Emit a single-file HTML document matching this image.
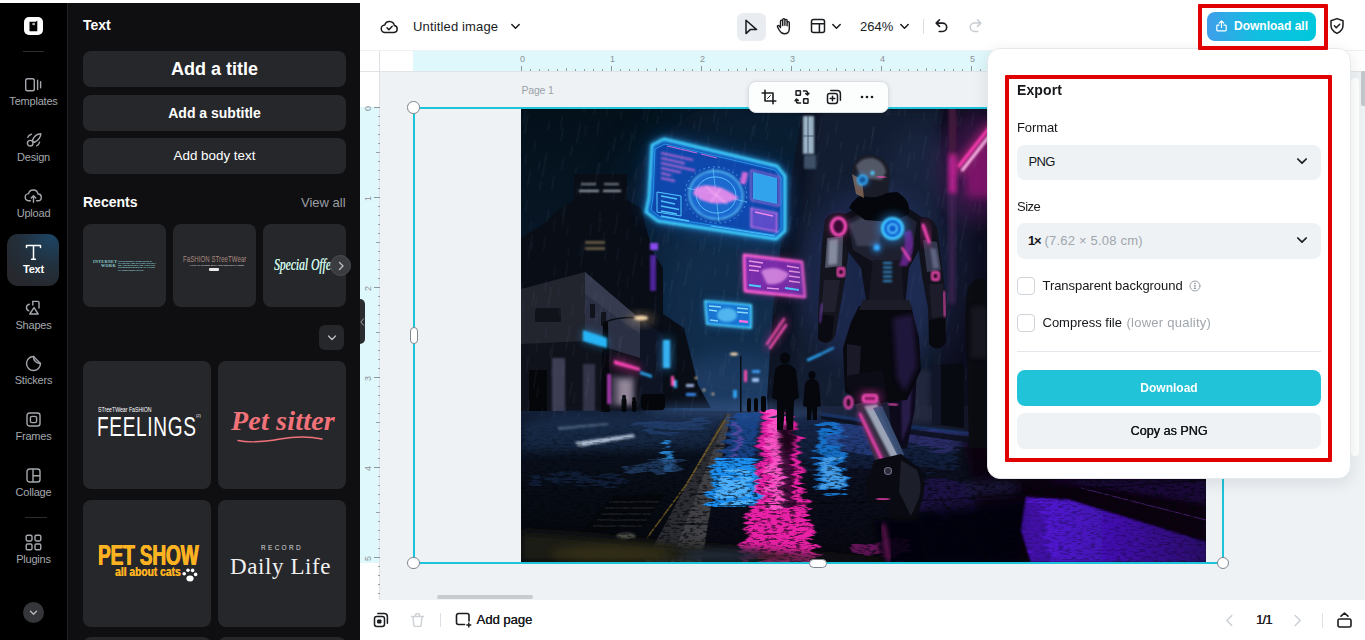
<!DOCTYPE html>
<html lang="en">
<head>
<meta charset="utf-8">
<title>Untitled image</title>
<style>
*{box-sizing:border-box;margin:0;padding:0}
html,body{width:1365px;height:640px;overflow:hidden;background:#fff;font-family:"Liberation Sans",sans-serif;}
.abs{position:absolute}
#app{position:relative;width:1365px;height:640px;overflow:hidden;background:#fff}
/* sidebar */
#side{left:0;top:3px;width:67px;height:637px;background:#000}
#panel{left:67px;top:3px;width:293px;height:637px;background:#0f0f11;border-left:1px solid #222326}
.nav{position:absolute;left:0;width:67px;text-align:center;color:#a4a8ad;font-size:11px;letter-spacing:-0.2px}
.nav svg{display:block;margin:0 auto}
.pbtn{position:absolute;left:83px;width:263px;background:#26272b;border-radius:8px;color:#fff;text-align:center;font-weight:bold}
.card{position:absolute;background:#26272b;border-radius:8px}
/* top bar */
#top{left:360px;top:3px;width:1005px;height:48px;background:#fff}
#canvas{left:360px;top:50px;width:1005px;height:550px;background:#eef2f5}
#bottom{left:360px;top:600px;width:1005px;height:40px;background:#fff}
.hd{background:#fff;border:1px solid #7f868f}
.sel{background:#eef2f5;border-radius:8px}
.cb{background:#fff;border:1px solid #cfd4da;border-radius:4px}
.t{position:absolute;white-space:nowrap;line-height:1}
</style>
</head>
<body>
<div id="app">
<!-- SIDEBAR -->
<div id="side" class="abs">
<!-- logo -->
<div class="abs" style="left:24px;top:14px;width:19px;height:18px;background:#fff;border-radius:5px"></div>
<svg class="abs" style="left:24px;top:14px" width="19" height="18" viewBox="0 0 19 18"><path d="M5.5 4.8h6.2l1.6-1.3v10.7H5.5z" fill="#000"/><circle cx="9.7" cy="7" r="1.3" fill="#fff"/><circle cx="9.9" cy="6.9" r="0.6" fill="#000"/></svg>
<div class="abs" style="left:23px;top:48px;width:21px;height:1px;background:#2c2d31"></div>
<!-- Templates -->
<svg class="abs" style="left:24px;top:74px" width="19" height="16" viewBox="0 0 19 16" fill="none" stroke="#a4a8ad" stroke-width="1.4" stroke-linecap="round"><rect x="1.7" y="1.7" width="8.6" height="12" rx="1.8"/><path d="M13.6 3.2v9.2M16.6 4.8v6"/></svg>
<div class="nav" style="top:92px">Templates</div>
<!-- Design -->
<svg class="abs" style="left:25px;top:129px" width="18" height="16" viewBox="0 0 18 16" fill="none" stroke="#a4a8ad" stroke-width="1.4" stroke-linecap="round" stroke-linejoin="round"><path d="M7.2 8.6c2-4.600 5.400-6.800 8.600-6.800c0 3.600-2.400 6.400-6.400 8.600z"/><circle cx="5.200" cy="11.200" r="2.800"/><path d="M2.800 5.400c0.600-1.800 1.800-2.800 3.600-3.200M14.600 10.200c-0.400 1.800-1.400 3-3 3.600"/></svg>
<div class="nav" style="top:148px">Design</div>
<!-- Upload -->
<svg class="abs" style="left:24px;top:185px" width="19" height="16" viewBox="0 0 19 16" fill="none" stroke="#a4a8ad" stroke-width="1.4" stroke-linecap="round" stroke-linejoin="round"><path d="M6.400 12.800h-1.400a3.600 3.600 0 0 1-0.400-7.200a4.800 4.800 0 0 1 9.400 0.400a3.400 3.400 0 0 1-0.200 6.800h-1.200"/><path d="M9.500 14.200v-6M7.200 10l2.300-2.300l2.300 2.300"/></svg>
<div class="nav" style="top:204px">Upload</div>
<!-- Text active -->
<div class="abs" style="left:7px;top:231px;width:52px;height:52px;border-radius:11px;background:radial-gradient(circle at 85% 5%,#1d4463 0%,#22303d 45%,#26282d 80%)"></div>
<svg class="abs" style="left:25px;top:241px" width="17" height="17" viewBox="0 0 17 17" fill="none" stroke="#fff" stroke-width="1.5" stroke-linecap="round" stroke-linejoin="round"><path d="M1.500 3.600v-2h14v2M8.500 1.600v13.400M6.600 15.200h3.800"/></svg>
<div class="nav" style="top:260px;color:#fff;font-weight:bold">Text</div>
<!-- Shapes -->
<svg class="abs" style="left:24px;top:297px" width="18" height="16" viewBox="0 0 18 16" fill="none" stroke="#a4a8ad" stroke-width="1.4" stroke-linecap="round" stroke-linejoin="round"><path d="M8.800 1.400h5a1.200 1.200 0 0 1 1.200 1.200v5.400"/><path d="M5.400 4.200a3.400 3.400 0 0 0-0.600 6.600"/><path d="M10 7.600l4.200 6.400h-8.400z"/><path d="M8.800 1.400v3.600"/></svg>
<div class="nav" style="top:316px">Shapes</div>
<!-- Stickers -->
<svg class="abs" style="left:25px;top:352px" width="17" height="17" viewBox="0 0 17 17" fill="none" stroke="#a4a8ad" stroke-width="1.400" stroke-linecap="round" stroke-linejoin="round"><path d="M8.500 1.500a7 7 0 1 0 7 7c-3.900 0.300-7.300-3.100-7-7z"/><path d="M8.500 1.500l7 7"/></svg>
<div class="nav" style="top:371px">Stickers</div>
<!-- Frames -->
<svg class="abs" style="left:26px;top:409px" width="15" height="15" viewBox="0 0 15 15" fill="none" stroke="#a4a8ad" stroke-width="1.400"><rect x="1" y="1" width="13" height="13" rx="2.500"/><rect x="4.400" y="4.400" width="6.200" height="6.200" rx="1.600"/></svg>
<div class="nav" style="top:427px">Frames</div>
<!-- Collage -->
<svg class="abs" style="left:26px;top:465px" width="15" height="15" viewBox="0 0 15 15" fill="none" stroke="#a4a8ad" stroke-width="1.400"><rect x="1" y="1" width="13" height="13" rx="2.500"/><path d="M7 1v13M7 7.800h7"/></svg>
<div class="nav" style="top:483px">Collage</div>
<div class="abs" style="left:25px;top:514px;width:22px;height:1px;background:#2c2d31"></div>
<!-- Plugins -->
<svg class="abs" style="left:25px;top:531px" width="17" height="17" viewBox="0 0 17 17" fill="none" stroke="#a4a8ad" stroke-width="1.400"><rect x="1.200" y="1.200" width="5.800" height="5.800" rx="1.400"/><rect x="10" y="1.200" width="5.800" height="5.800" rx="1.400"/><rect x="1.200" y="10" width="5.800" height="5.800" rx="1.400"/><rect x="10" y="10" width="5.800" height="5.800" rx="1.400"/></svg>
<div class="nav" style="top:550px">Plugins</div>
<div class="abs" style="left:23px;top:599px;width:21px;height:21px;border-radius:50%;background:#34363a"></div>
<svg class="abs" style="left:23px;top:599px" width="21" height="21" viewBox="0 0 21 21" fill="none" stroke="#b4b8bd" stroke-width="1.400" stroke-linecap="round" stroke-linejoin="round"><path d="M7.500 9.200l3 3l3-3"/></svg>
</div>
<div id="panel" class="abs"></div>
<div class="t" style="left:83px;top:18px;font-size:14px;font-weight:bold;color:#fff">Text</div>
<div class="pbtn" style="top:51px;height:36px;font-size:18px;line-height:36px">Add a title</div>
<div class="pbtn" style="top:95px;height:36px;font-size:14px;line-height:36px">Add a subtitle</div>
<div class="pbtn" style="top:138px;height:36px;font-size:13.400px;line-height:36px;font-weight:normal">Add body text</div>
<div class="t" style="left:83px;top:195px;font-size:14px;font-weight:bold;color:#fff">Recents</div>
<div class="t" style="left:301px;top:196px;font-size:13px;color:#9a9ea4">View all</div>
<!-- recents cards -->
<div class="card" style="left:83px;top:224px;width:83px;height:83px"></div>
<div class="card" style="left:173px;top:224px;width:83px;height:83px"></div>
<div class="card" style="left:263px;top:224px;width:83px;height:83px"></div>
<div class="t" style="left:93px;top:259.500px;font-size:4.200px;color:#8fd3d8;font-family:'Liberation Serif',serif;font-weight:bold;letter-spacing:0.300px;text-align:right;width:23px;line-height:4.600px">INTERNET<br>WORK</div>
<div class="t" style="left:118px;top:259.500px;font-size:2.200px;color:#8fd3d8;line-height:2.300px;width:40px;white-space:normal;font-weight:bold">THE INTERNET AS WE KNOW IS CHANGING AND SHAPING THE WAY WE ARE WORKING AND ALSO THE EXPERIENCE MADE UP OF TAKING OF USER INTERACTION</div>
<div class="t" style="left:183px;top:254px;font-size:7px;color:#a98a80;letter-spacing:0.100px;transform:scale(0.860,1.250);transform-origin:0 0">FaSHION STreeTWear</div>
<div class="t" style="left:190px;top:263.500px;font-size:2.200px;color:#c8c8c8;letter-spacing:0.100px;font-weight:bold">LOOK IS ON NEW WITH OUR NEW DROP ITEMS</div>
<div class="abs" style="left:209px;top:268px;width:10px;height:2.500px;border-radius:1px;background:#e8e8e8"></div>
<div class="t" style="left:274px;top:255px;font-size:16.500px;color:#c9f0e2;font-family:'Liberation Serif',serif;font-style:italic;width:100px;height:22px;line-height:20px;overflow:hidden;transform:scaleX(0.700);transform-origin:0 0;text-shadow:0.400px 0 0 #c9f0e2">Special Offer</div>
<div class="abs" style="left:330px;top:255px;width:21px;height:21px;border-radius:50%;background:#3a3c40;border:1px solid #4a4c50"></div>
<svg class="abs" style="left:330.500px;top:255.500px" width="20" height="20" viewBox="0 0 20 20" fill="none" stroke="#b9bcc1" stroke-width="1.400" stroke-linecap="round" stroke-linejoin="round"><path d="M8.500 6.500l3.500 3.500l-3.500 3.500"/></svg>
<div class="card" style="left:319px;top:325px;width:25px;height:25px;border-radius:6px"></div>
<svg class="abs" style="left:318.500px;top:325px" width="26" height="25" viewBox="0 0 26 25" fill="none" stroke="#b9bcc1" stroke-width="1.400" stroke-linecap="round" stroke-linejoin="round"><path d="M9.500 11l3.500 3.500l3.500-3.500"/></svg>
<!-- big cards -->
<div class="card" style="left:83px;top:361px;width:128px;height:128px"></div>
<div class="card" style="left:218px;top:361px;width:128px;height:128px"></div>
<div class="card" style="left:83px;top:500px;width:128px;height:127px"></div>
<div class="card" style="left:218px;top:500px;width:128px;height:127px"></div>
<div class="card" style="left:83px;top:637px;width:128px;height:20px"></div>
<div class="card" style="left:218px;top:637px;width:128px;height:20px"></div>
<!-- FEELINGS -->
<div class="t" style="left:97.500px;top:407px;font-size:6.500px;color:#fff;transform:scaleX(0.800);transform-origin:0 0">STreeTWear FaSHION</div>
<div class="t" style="left:97px;top:413px;font-size:28px;color:#fff;transform:scaleX(0.680);transform-origin:0 0;letter-spacing:1px">FEELINGS</div>
<div class="t" style="left:196px;top:414px;font-size:4px;color:#fff">(2)</div>
<!-- Pet sitter -->
<div class="t" style="left:231px;top:407px;font-size:28px;color:#f2727a;font-family:'Liberation Serif',serif;font-style:italic;font-weight:bold;letter-spacing:0.200px">Pet sitter</div>
<svg class="abs" style="left:236px;top:434px" width="90" height="10" viewBox="0 0 90 10" fill="none" stroke="#f2727a" stroke-width="1.400" stroke-linecap="round"><path d="M2 6.500c14 3 28 1 42-1.500s28-3 42 0"/></svg>
<!-- PET SHOW -->
<div class="t" style="left:98px;top:541px;font-size:29px;color:#fbb321;font-weight:bold;transform:scaleX(0.660);transform-origin:0 0;letter-spacing:-0.300px;text-shadow:0.500px 0 0 #fbb321,-0.500px 0 0 #fbb321">PET SHOW</div>
<div class="t" style="left:115px;top:566px;font-size:12.500px;color:#fbb321;font-weight:bold;transform:scaleX(0.820);transform-origin:0 0;text-shadow:0.400px 0 0 #fbb321">all about cats</div>
<svg class="abs" style="left:181px;top:567px" width="17" height="16" viewBox="0 0 17 16" fill="#fff"><ellipse cx="9" cy="11.500" rx="3.600" ry="3"/><circle cx="3.200" cy="6.800" r="1.800"/><circle cx="7" cy="3.200" r="1.800"/><circle cx="11.600" cy="3.400" r="1.800"/><circle cx="14.600" cy="7.400" r="1.800"/></svg>
<!-- Daily Life -->
<div class="t" style="left:261px;top:544.500px;font-size:6.500px;color:#d8d8d8;letter-spacing:2.300px">RECORD</div>
<div class="t" style="left:230px;top:555px;font-size:23px;color:#f0f0f0;font-family:'Liberation Serif',serif;letter-spacing:0.600px">Daily Life</div>
<!-- TOPBAR -->
<div id="top" class="abs"></div>
<svg class="abs" style="left:380px;top:18px" width="19" height="17" viewBox="0 0 19 17" fill="none" stroke="#1a1c1f" stroke-width="1.500" stroke-linecap="round" stroke-linejoin="round"><path d="M5.200 14.500a3.700 3.700 0 0 1-0.500-7.400a5 5 0 0 1 9.700 0.500a3.500 3.500 0 0 1-0.300 6.900z"/><path d="M7 9.800l1.900 1.900l3.300-3.400"/></svg>
<div class="t" style="left:413px;top:20px;font-size:13px;color:#1a1c1f;letter-spacing:0.150px">Untitled image</div>
<svg class="abs" style="left:510px;top:22px" width="11" height="9" viewBox="0 0 11 9" fill="none" stroke="#1a1c1f" stroke-width="1.500" stroke-linecap="round" stroke-linejoin="round"><path d="M1.800 2.500l3.700 3.700l3.700-3.700"/></svg>
<div class="abs" style="left:737px;top:12.500px;width:28.500px;height:28.500px;border-radius:6px;background:#e9edf1"></div>
<svg class="abs" style="left:743px;top:18px" width="17" height="18" viewBox="0 0 17 18" fill="none" stroke="#1a1c1f" stroke-width="1.500" stroke-linejoin="round"><path d="M3 2.200v13.400l4.200-4h6.400z"/></svg>
<svg class="abs" style="left:775px;top:17px" width="18" height="19" viewBox="0 0 18 19" fill="none" stroke="#1a1c1f" stroke-width="1.400" stroke-linecap="round" stroke-linejoin="round"><path d="M5.500 10.500v-6.300a1.100 1.100 0 0 1 2.200 0v4.300v-5.800a1.100 1.100 0 0 1 2.200 0v5.600v-4.800a1.100 1.100 0 0 1 2.200 0v5.200v-3a1.100 1.100 0 0 1 2.200 0v5.800c0 3.200-2 5.300-5 5.300c-2.400 0-3.600-1.200-4.800-3.300l-2-3.600c-0.600-1.200 0.800-2 1.700-1z"/></svg>
<svg class="abs" style="left:810px;top:18px" width="16" height="16" viewBox="0 0 16 16" fill="none" stroke="#1a1c1f" stroke-width="1.500" stroke-linejoin="round"><rect x="1.500" y="1.500" width="13" height="13" rx="2"/><path d="M1.500 5.800h13M9.400 5.800v8.700"/></svg>
<svg class="abs" style="left:831px;top:22px" width="11" height="9" viewBox="0 0 11 9" fill="none" stroke="#1a1c1f" stroke-width="1.500" stroke-linecap="round" stroke-linejoin="round"><path d="M1.800 2.500l3.700 3.700l3.700-3.700"/></svg>
<div class="t" style="left:860px;top:20px;font-size:13px;color:#1a1c1f">264%</div>
<svg class="abs" style="left:899px;top:22px" width="11" height="9" viewBox="0 0 11 9" fill="none" stroke="#1a1c1f" stroke-width="1.500" stroke-linecap="round" stroke-linejoin="round"><path d="M1.800 2.500l3.700 3.700l3.700-3.700"/></svg>
<div class="abs" style="left:923px;top:19px;width:1px;height:15px;background:#d9dde1"></div>
<svg class="abs" style="left:934px;top:18px" width="15" height="16" viewBox="0 0 15 16" fill="none" stroke="#1a1c1f" stroke-width="1.600" stroke-linecap="round" stroke-linejoin="round"><path d="M5.500 1.800l-3.300 3.300l3.300 3.300M2.500 5.100h6a4.200 4.200 0 0 1 0 8.400h-3.300"/></svg>
<svg class="abs" style="left:968px;top:18px" width="15" height="16" viewBox="0 0 15 16" fill="none" stroke="#c9cdd2" stroke-width="1.500" stroke-linecap="round" stroke-linejoin="round"><path d="M9.500 1.800l3.300 3.300l-3.300 3.300M12.500 5.100h-6a4.200 4.200 0 0 0 0 8.400h3.300"/></svg>
<!-- download all -->
<div class="abs" style="left:1207px;top:12px;width:109px;height:29px;border-radius:8px;background:linear-gradient(90deg,#3f9eea 0%,#12bfe0 45%,#00c8dc 100%)"></div>
<svg class="abs" style="left:1215px;top:19px" width="13" height="14" viewBox="0 0 13 14" fill="none" stroke="#fff" stroke-width="1.200" stroke-linecap="round" stroke-linejoin="round"><path d="M6.500 8.500v-6.500M4.300 4l2.200-2.200l2.200 2.200M4 6.200h-1.400a0.800 0.800 0 0 0-0.800 0.800v4a0.800 0.800 0 0 0 0.800 0.800h7.800a0.800 0.800 0 0 0 0.800-0.800v-4a0.800 0.800 0 0 0-0.800-0.800h-1.400"/></svg>
<div class="t" style="left:1234px;top:20px;font-size:12px;font-weight:bold;color:#fff">Download all</div>
<svg class="abs" style="left:1329px;top:17px" width="16" height="18" viewBox="0 0 16 18" fill="none" stroke="#1a1c1f" stroke-width="1.500" stroke-linecap="round" stroke-linejoin="round"><path d="M8 1.600l6 2.200v4.800c0 3.600-2.400 6.200-6 7.800c-3.600-1.600-6-4.200-6-7.800v-4.800z"/><path d="M5.400 8.800l1.900 1.900l3.400-3.500"/></svg>
<!-- CANVAS -->
<div id="canvas" class="abs"></div>
<div class="abs" style="left:360px;top:50.500px;width:1005px;height:1px;background:#e0e4e7"></div>
<!-- h ruler -->
<div class="abs" style="left:360px;top:51px;width:1005px;height:20px;background:#fff"></div>
<div class="abs" style="left:360px;top:71px;width:1005px;height:1px;background:#e0e4e7"></div>
<div class="abs" style="left:413px;top:51px;width:810px;height:20px;background:#dff8fb"></div>

<!-- v ruler -->
<div class="abs" style="left:360px;top:72px;width:20px;height:528px;background:#fff"></div>
<div class="abs" style="left:360px;top:107px;width:20px;height:456px;background:#dff8fb"></div>
<div class="abs" style="left:379px;top:51px;width:1px;height:549px;background:#dde1e5"></div>
<div class="abs" style="left:521px;top:66px;width:1px;height:5px;background:#8f959c"></div>
<div class="t" style="left:520px;top:55px;font-size:9px;color:#8b9198">0</div>
<div class="abs" style="left:530px;top:69px;width:1px;height:2px;background:#9aa0a7"></div>
<div class="abs" style="left:539px;top:69px;width:1px;height:2px;background:#9aa0a7"></div>
<div class="abs" style="left:548px;top:69px;width:1px;height:2px;background:#9aa0a7"></div>
<div class="abs" style="left:557px;top:69px;width:1px;height:2px;background:#9aa0a7"></div>
<div class="abs" style="left:566px;top:68px;width:1px;height:3px;background:#9aa0a7"></div>
<div class="abs" style="left:575px;top:69px;width:1px;height:2px;background:#9aa0a7"></div>
<div class="abs" style="left:584px;top:69px;width:1px;height:2px;background:#9aa0a7"></div>
<div class="abs" style="left:593px;top:69px;width:1px;height:2px;background:#9aa0a7"></div>
<div class="abs" style="left:602px;top:69px;width:1px;height:2px;background:#9aa0a7"></div>
<div class="abs" style="left:611px;top:66px;width:1px;height:5px;background:#8f959c"></div>
<div class="t" style="left:610px;top:55px;font-size:9px;color:#8b9198">1</div>
<div class="abs" style="left:620px;top:69px;width:1px;height:2px;background:#9aa0a7"></div>
<div class="abs" style="left:629px;top:69px;width:1px;height:2px;background:#9aa0a7"></div>
<div class="abs" style="left:638px;top:69px;width:1px;height:2px;background:#9aa0a7"></div>
<div class="abs" style="left:647px;top:69px;width:1px;height:2px;background:#9aa0a7"></div>
<div class="abs" style="left:656px;top:68px;width:1px;height:3px;background:#9aa0a7"></div>
<div class="abs" style="left:665px;top:69px;width:1px;height:2px;background:#9aa0a7"></div>
<div class="abs" style="left:674px;top:69px;width:1px;height:2px;background:#9aa0a7"></div>
<div class="abs" style="left:683px;top:69px;width:1px;height:2px;background:#9aa0a7"></div>
<div class="abs" style="left:692px;top:69px;width:1px;height:2px;background:#9aa0a7"></div>
<div class="abs" style="left:701px;top:66px;width:1px;height:5px;background:#8f959c"></div>
<div class="t" style="left:700px;top:55px;font-size:9px;color:#8b9198">2</div>
<div class="abs" style="left:710px;top:69px;width:1px;height:2px;background:#9aa0a7"></div>
<div class="abs" style="left:719px;top:69px;width:1px;height:2px;background:#9aa0a7"></div>
<div class="abs" style="left:728px;top:69px;width:1px;height:2px;background:#9aa0a7"></div>
<div class="abs" style="left:737px;top:69px;width:1px;height:2px;background:#9aa0a7"></div>
<div class="abs" style="left:746px;top:68px;width:1px;height:3px;background:#9aa0a7"></div>
<div class="abs" style="left:755px;top:69px;width:1px;height:2px;background:#9aa0a7"></div>
<div class="abs" style="left:764px;top:69px;width:1px;height:2px;background:#9aa0a7"></div>
<div class="abs" style="left:773px;top:69px;width:1px;height:2px;background:#9aa0a7"></div>
<div class="abs" style="left:782px;top:69px;width:1px;height:2px;background:#9aa0a7"></div>
<div class="abs" style="left:791px;top:66px;width:1px;height:5px;background:#8f959c"></div>
<div class="t" style="left:790px;top:55px;font-size:9px;color:#8b9198">3</div>
<div class="abs" style="left:800px;top:69px;width:1px;height:2px;background:#9aa0a7"></div>
<div class="abs" style="left:809px;top:69px;width:1px;height:2px;background:#9aa0a7"></div>
<div class="abs" style="left:818px;top:69px;width:1px;height:2px;background:#9aa0a7"></div>
<div class="abs" style="left:827px;top:69px;width:1px;height:2px;background:#9aa0a7"></div>
<div class="abs" style="left:836px;top:68px;width:1px;height:3px;background:#9aa0a7"></div>
<div class="abs" style="left:845px;top:69px;width:1px;height:2px;background:#9aa0a7"></div>
<div class="abs" style="left:854px;top:69px;width:1px;height:2px;background:#9aa0a7"></div>
<div class="abs" style="left:863px;top:69px;width:1px;height:2px;background:#9aa0a7"></div>
<div class="abs" style="left:872px;top:69px;width:1px;height:2px;background:#9aa0a7"></div>
<div class="abs" style="left:881px;top:66px;width:1px;height:5px;background:#8f959c"></div>
<div class="t" style="left:880px;top:55px;font-size:9px;color:#8b9198">4</div>
<div class="abs" style="left:890px;top:69px;width:1px;height:2px;background:#9aa0a7"></div>
<div class="abs" style="left:899px;top:69px;width:1px;height:2px;background:#9aa0a7"></div>
<div class="abs" style="left:908px;top:69px;width:1px;height:2px;background:#9aa0a7"></div>
<div class="abs" style="left:917px;top:69px;width:1px;height:2px;background:#9aa0a7"></div>
<div class="abs" style="left:926px;top:68px;width:1px;height:3px;background:#9aa0a7"></div>
<div class="abs" style="left:935px;top:69px;width:1px;height:2px;background:#9aa0a7"></div>
<div class="abs" style="left:944px;top:69px;width:1px;height:2px;background:#9aa0a7"></div>
<div class="abs" style="left:953px;top:69px;width:1px;height:2px;background:#9aa0a7"></div>
<div class="abs" style="left:962px;top:69px;width:1px;height:2px;background:#9aa0a7"></div>
<div class="abs" style="left:971px;top:66px;width:1px;height:5px;background:#8f959c"></div>
<div class="t" style="left:970px;top:55px;font-size:9px;color:#8b9198">5</div>
<div class="abs" style="left:980px;top:69px;width:1px;height:2px;background:#9aa0a7"></div>
<div class="abs" style="left:989px;top:69px;width:1px;height:2px;background:#9aa0a7"></div>
<div class="abs" style="left:998px;top:69px;width:1px;height:2px;background:#9aa0a7"></div>
<div class="abs" style="left:374px;top:107px;width:6px;height:1px;background:#8f959c"></div>
<div class="t" style="left:364.500px;top:104px;font-size:9px;color:#8b9198;transform:rotate(-90deg);transform-origin:50% 50%;width:6px;text-align:center">0</div>
<div class="abs" style="left:378px;top:116px;width:2px;height:1px;background:#9aa0a7"></div>
<div class="abs" style="left:378px;top:125px;width:2px;height:1px;background:#9aa0a7"></div>
<div class="abs" style="left:378px;top:134px;width:2px;height:1px;background:#9aa0a7"></div>
<div class="abs" style="left:378px;top:143px;width:2px;height:1px;background:#9aa0a7"></div>
<div class="abs" style="left:376px;top:152px;width:4px;height:1px;background:#9aa0a7"></div>
<div class="abs" style="left:378px;top:161px;width:2px;height:1px;background:#9aa0a7"></div>
<div class="abs" style="left:378px;top:170px;width:2px;height:1px;background:#9aa0a7"></div>
<div class="abs" style="left:378px;top:179px;width:2px;height:1px;background:#9aa0a7"></div>
<div class="abs" style="left:378px;top:188px;width:2px;height:1px;background:#9aa0a7"></div>
<div class="abs" style="left:374px;top:197px;width:6px;height:1px;background:#8f959c"></div>
<div class="t" style="left:364.500px;top:194px;font-size:9px;color:#8b9198;transform:rotate(-90deg);transform-origin:50% 50%;width:6px;text-align:center">1</div>
<div class="abs" style="left:378px;top:206px;width:2px;height:1px;background:#9aa0a7"></div>
<div class="abs" style="left:378px;top:215px;width:2px;height:1px;background:#9aa0a7"></div>
<div class="abs" style="left:378px;top:224px;width:2px;height:1px;background:#9aa0a7"></div>
<div class="abs" style="left:378px;top:233px;width:2px;height:1px;background:#9aa0a7"></div>
<div class="abs" style="left:376px;top:242px;width:4px;height:1px;background:#9aa0a7"></div>
<div class="abs" style="left:378px;top:251px;width:2px;height:1px;background:#9aa0a7"></div>
<div class="abs" style="left:378px;top:260px;width:2px;height:1px;background:#9aa0a7"></div>
<div class="abs" style="left:378px;top:269px;width:2px;height:1px;background:#9aa0a7"></div>
<div class="abs" style="left:378px;top:278px;width:2px;height:1px;background:#9aa0a7"></div>
<div class="abs" style="left:374px;top:287px;width:6px;height:1px;background:#8f959c"></div>
<div class="t" style="left:364.500px;top:284px;font-size:9px;color:#8b9198;transform:rotate(-90deg);transform-origin:50% 50%;width:6px;text-align:center">2</div>
<div class="abs" style="left:378px;top:296px;width:2px;height:1px;background:#9aa0a7"></div>
<div class="abs" style="left:378px;top:305px;width:2px;height:1px;background:#9aa0a7"></div>
<div class="abs" style="left:378px;top:314px;width:2px;height:1px;background:#9aa0a7"></div>
<div class="abs" style="left:378px;top:323px;width:2px;height:1px;background:#9aa0a7"></div>
<div class="abs" style="left:376px;top:332px;width:4px;height:1px;background:#9aa0a7"></div>
<div class="abs" style="left:378px;top:341px;width:2px;height:1px;background:#9aa0a7"></div>
<div class="abs" style="left:378px;top:350px;width:2px;height:1px;background:#9aa0a7"></div>
<div class="abs" style="left:378px;top:359px;width:2px;height:1px;background:#9aa0a7"></div>
<div class="abs" style="left:378px;top:368px;width:2px;height:1px;background:#9aa0a7"></div>
<div class="abs" style="left:374px;top:377px;width:6px;height:1px;background:#8f959c"></div>
<div class="t" style="left:364.500px;top:374px;font-size:9px;color:#8b9198;transform:rotate(-90deg);transform-origin:50% 50%;width:6px;text-align:center">3</div>
<div class="abs" style="left:378px;top:386px;width:2px;height:1px;background:#9aa0a7"></div>
<div class="abs" style="left:378px;top:395px;width:2px;height:1px;background:#9aa0a7"></div>
<div class="abs" style="left:378px;top:404px;width:2px;height:1px;background:#9aa0a7"></div>
<div class="abs" style="left:378px;top:413px;width:2px;height:1px;background:#9aa0a7"></div>
<div class="abs" style="left:376px;top:422px;width:4px;height:1px;background:#9aa0a7"></div>
<div class="abs" style="left:378px;top:431px;width:2px;height:1px;background:#9aa0a7"></div>
<div class="abs" style="left:378px;top:440px;width:2px;height:1px;background:#9aa0a7"></div>
<div class="abs" style="left:378px;top:449px;width:2px;height:1px;background:#9aa0a7"></div>
<div class="abs" style="left:378px;top:458px;width:2px;height:1px;background:#9aa0a7"></div>
<div class="abs" style="left:374px;top:467px;width:6px;height:1px;background:#8f959c"></div>
<div class="t" style="left:364.500px;top:464px;font-size:9px;color:#8b9198;transform:rotate(-90deg);transform-origin:50% 50%;width:6px;text-align:center">4</div>
<div class="abs" style="left:378px;top:476px;width:2px;height:1px;background:#9aa0a7"></div>
<div class="abs" style="left:378px;top:485px;width:2px;height:1px;background:#9aa0a7"></div>
<div class="abs" style="left:378px;top:494px;width:2px;height:1px;background:#9aa0a7"></div>
<div class="abs" style="left:378px;top:503px;width:2px;height:1px;background:#9aa0a7"></div>
<div class="abs" style="left:376px;top:512px;width:4px;height:1px;background:#9aa0a7"></div>
<div class="abs" style="left:378px;top:521px;width:2px;height:1px;background:#9aa0a7"></div>
<div class="abs" style="left:378px;top:530px;width:2px;height:1px;background:#9aa0a7"></div>
<div class="abs" style="left:378px;top:539px;width:2px;height:1px;background:#9aa0a7"></div>
<div class="abs" style="left:378px;top:548px;width:2px;height:1px;background:#9aa0a7"></div>
<div class="abs" style="left:374px;top:557px;width:6px;height:1px;background:#8f959c"></div>
<div class="t" style="left:364.500px;top:554px;font-size:9px;color:#8b9198;transform:rotate(-90deg);transform-origin:50% 50%;width:6px;text-align:center">5</div>
<div class="abs" style="left:378px;top:566px;width:2px;height:1px;background:#9aa0a7"></div>
<div class="abs" style="left:378px;top:575px;width:2px;height:1px;background:#9aa0a7"></div>
<div class="abs" style="left:378px;top:584px;width:2px;height:1px;background:#9aa0a7"></div>
<div class="abs" style="left:378px;top:593px;width:2px;height:1px;background:#9aa0a7"></div>
<div class="t" style="left:521.500px;top:85px;font-size:10.500px;color:#9ba1a8;letter-spacing:-0.200px">Page 1</div>
<!-- IMAGE -->
<div id="img" class="abs" style="left:521px;top:108px;width:685px;height:454px;background:#0a1420;overflow:hidden">
<!--IMG-START-->
<svg width="685" height="454" viewBox="0 0 685 454" style="position:absolute;left:0;top:0;filter:blur(0.6px)">
<defs>
<filter id="b1" x="-20%" y="-20%" width="140%" height="140%"><feGaussianBlur stdDeviation="1"/></filter>
<filter id="b2" x="-30%" y="-30%" width="160%" height="160%"><feGaussianBlur stdDeviation="2.500"/></filter>
<filter id="b4" x="-40%" y="-40%" width="180%" height="180%"><feGaussianBlur stdDeviation="5"/></filter>
<filter id="b8" x="-50%" y="-50%" width="200%" height="200%"><feGaussianBlur stdDeviation="10"/></filter>
<filter id="b16" x="-60%" y="-60%" width="220%" height="220%"><feGaussianBlur stdDeviation="20"/></filter>
<linearGradient id="sky" x1="0" y1="0" x2="0" y2="1"><stop offset="0" stop-color="#04111b"/><stop offset="0.550" stop-color="#0a1a2e"/><stop offset="1" stop-color="#15294a"/></linearGradient>
<linearGradient id="road" x1="0" y1="0" x2="0" y2="1"><stop offset="0" stop-color="#131f36"/><stop offset="0.220" stop-color="#0a111e"/><stop offset="0.600" stop-color="#070b13"/><stop offset="1" stop-color="#05070c"/></linearGradient>
<linearGradient id="walk" x1="0" y1="0" x2="0" y2="1"><stop offset="0" stop-color="#18223c"/><stop offset="0.350" stop-color="#0c1020"/><stop offset="1" stop-color="#07070f"/></linearGradient>
<linearGradient id="pinkr" x1="0" y1="0" x2="0" y2="1"><stop offset="0" stop-color="#ff2fb4" stop-opacity="0.950"/><stop offset="0.500" stop-color="#f01aa6" stop-opacity="0.800"/><stop offset="1" stop-color="#e0189c" stop-opacity="0.750"/></linearGradient>

<filter id="wet" x="-10%" y="-10%" width="120%" height="120%"><feTurbulence type="fractalNoise" baseFrequency="0.030 0.220" numOctaves="2" seed="7" result="n"/><feDisplacementMap in="SourceGraphic" in2="n" scale="26" xChannelSelector="R" yChannelSelector="G"/><feGaussianBlur stdDeviation="1.200 0.600"/></filter>
<filter id="speck" x="0" y="0" width="100%" height="100%"><feTurbulence type="fractalNoise" baseFrequency="0.160 0.550" numOctaves="3" seed="3"/><feColorMatrix type="matrix" values="0 0 0 0 0.001  0 0 0 0 0.002  0 0 0 0 0.004  -4.500 0 0 0 2.300"/></filter>
<filter id="grain" x="0" y="0" width="100%" height="100%"><feTurbulence type="fractalNoise" baseFrequency="0.500 0.080" numOctaves="2" seed="11"/><feColorMatrix type="matrix" values="0 0 0 0 0.550  0 0 0 0 0.700  0 0 0 0 0.950  0 2.600 0 0 -1.350"/></filter>
<pattern id="rain" width="37" height="61" patternUnits="userSpaceOnUse" patternTransform="rotate(8)"><path d="M5 2v14M19 30v11M30 9v9M12 44v12M26 50v8" stroke="#9ac0e8" stroke-width="0.700" opacity="0.550"/></pattern>
<pattern id="rain2" width="53" height="83" patternUnits="userSpaceOnUse" patternTransform="rotate(10)"><path d="M8 5v20M33 40v24M45 12v14M20 60v16" stroke="#b8d4f0" stroke-width="0.900" opacity="0.500"/></pattern>
<linearGradient id="purp" x1="505" y1="0" x2="685" y2="0" gradientUnits="userSpaceOnUse"><stop offset="0" stop-color="#5416d6"/><stop offset="0.400" stop-color="#4512b8"/><stop offset="1" stop-color="#2a0a68"/></linearGradient>
<linearGradient id="gmg" x1="0" y1="306" x2="0" y2="454" gradientUnits="userSpaceOnUse"><stop offset="0" stop-color="#000"/><stop offset="0.250" stop-color="#999"/><stop offset="0.500" stop-color="#fff"/></linearGradient><mask id="gm" maskUnits="userSpaceOnUse" x="0" y="300" width="685" height="160"><rect x="0" y="300" width="685" height="160" fill="url(#gmg)"/></mask>
<linearGradient id="wallg" x1="300" y1="0" x2="685" y2="0" gradientUnits="userSpaceOnUse"><stop offset="0" stop-color="#1c2640"/><stop offset="0.300" stop-color="#171b2e"/><stop offset="0.500" stop-color="#0c0d1a"/><stop offset="1" stop-color="#090912"/></linearGradient>
</defs>
<!-- SKY -->
<rect width="685" height="454" fill="url(#sky)"/>
<ellipse cx="260" cy="150" rx="170" ry="170" fill="#0d2742" opacity="0.550" filter="url(#b16)"/>
<ellipse cx="215" cy="285" rx="70" ry="40" fill="#2a4a78" opacity="0.700" filter="url(#b8)"/>
<ellipse cx="215" cy="190" rx="80" ry="110" fill="#16385c" opacity="0.550" filter="url(#b16)"/>
<!-- LEFT BUILDINGS -->
<path d="M0 130L20 118L40 100L53 92V66H106V92L120 100L131 142L142 160V206L163 220L177 277L190 300H0z" fill="#080d16"/>
<path d="M0 181L64 164V304H0z" fill="#22242e"/>
<path d="M64 164L119 211V304H64z" fill="#2c3044"/>
<path d="M64 164L119 211V226L64 186z" fill="#3a3e52" opacity="0.800"/>
<path d="M0 236L64 233L119 250V304H0z" fill="#10121b"/>
<path d="M119 211L142 226V304H119z" fill="#0e1424"/>
<rect x="14" y="200" width="26" height="14" fill="#10121a" opacity="0.900"/>
<rect x="69" y="196" width="5" height="14" fill="#10121a" opacity="0.900"/><rect x="80" y="204" width="5" height="14" fill="#10121a" opacity="0.900"/>
<rect x="8" y="262" width="18" height="42" fill="#05060a"/>
<rect x="31" y="250" width="13" height="54" fill="#4a4a62" opacity="0.800" filter="url(#b1)"/>
<rect x="62" y="256" width="12" height="48" fill="#3c3c54" opacity="0.800" filter="url(#b1)"/>
<!-- tall building windows -->
<g fill="#dfe8f0" filter="url(#b1)" opacity="0.800"><rect x="60" y="75.500" width="15" height="1.300"/><rect x="83" y="75.500" width="15" height="1.300"/><rect x="58" y="82" width="20" height="1.800"/><rect x="82" y="82" width="18" height="1.800"/></g>
<g fill="#8a7a58" filter="url(#b1)" opacity="0.700"><rect x="64" y="133" width="20" height="3"/><rect x="64" y="139" width="20" height="3"/></g>
<!-- RIGHT BUILDINGS -->
<path d="M282 0H685V330H250L246 290L252 200L262 120z" fill="#0d1424"/>
<path d="M300 0H420L400 300H270L280 120z" fill="#182238" opacity="0.700" filter="url(#b4)"/>
<path d="M420 0H685V454H420z" fill="#0c0d1e"/>
<ellipse cx="400" cy="140" rx="50" ry="120" fill="#28345a" opacity="0.300" filter="url(#b8)"/>
<rect x="282" y="8" width="11" height="38" fill="#aac4d8" opacity="0.900" filter="url(#b1)"/>
<path d="M282 28H293M287 8V46" stroke="#3a4a60" stroke-width="0.800"/>
<rect x="283" y="47" width="12" height="14" fill="#5d7690" opacity="0.600" filter="url(#b1)"/>

<!-- GROUND -->
<path d="M0 303H685V454H0z" fill="url(#road)"/>
<path d="M209 305H685V454H137z" fill="url(#walk)"/>
<!-- horizon haze -->
<ellipse cx="215" cy="303" rx="90" ry="9" fill="#3a5a8a" opacity="0.500" filter="url(#b4)"/>
<!-- road sheen -->
<path d="M40 306L206 305L186 340L0 344V316z" fill="#1c3458" opacity="0.600" filter="url(#b4)"/>
<path d="M36 319L86 315L88 317L38 322z" fill="#7f93ad" opacity="0.500" filter="url(#b1)"/>
<path d="M54 334L112 326L115 329L58 339z" fill="#c8d6ea" opacity="0.850" filter="url(#b1)"/>
<g filter="url(#wet)">
<rect x="141" y="338" width="9" height="26" fill="#2a8ad8" opacity="0.900"/>
<ellipse cx="130" cy="358" rx="30" ry="7" fill="#24426e" opacity="0.700"/>
<ellipse cx="150" cy="318" rx="40" ry="5" fill="#2a4a88" opacity="0.500"/>
<ellipse cx="60" cy="372" rx="50" ry="5" fill="#14284a" opacity="0.600"/>
</g>
<!-- curb -->
<path d="M204 306L210 306L201 350L190 400L181 454H124L165 377z" fill="#2c2d33"/>
<path d="M206 306L210 306L200 352L189 402L180 454H150L178 380z" fill="#46464a" opacity="0.850"/>
<path d="M204 312L165 377L126 430" stroke="#8a6c24" stroke-width="1.600" opacity="0.700" fill="none"/>
<path d="M194 338H203M184 360H199M172 386H194M156 416H188M140 446H182" stroke="#0a0c12" stroke-width="1.300" opacity="0.800"/>
<!-- drain -->
<path d="M92 388L144 386L122 420L60 424z" fill="#05070a"/>
<g stroke="#2a2e38" stroke-width="1" opacity="0.900"><path d="M88 394H138M84 400H134M80 406H130M76 412H126M72 418H122"/></g>
<ellipse cx="105" cy="428" rx="10" ry="3" fill="#a8a898" opacity="0.500" filter="url(#b1)"/>
<!-- sidewalk reflections (wet) -->
<g filter="url(#wet)">
<path d="M210 308H420L440 360H196z" fill="#1a2a58" opacity="0.450"/>
<path d="M243 306H272L280 360L296 454H218L236 360z" fill="#f524ae" opacity="0.950"/>
<path d="M248 306H264L268 400H246z" fill="#ff5fd0" opacity="0.800"/>
<path d="M194 350H234L236 398H186z" fill="#1d8ff0"/>
<path d="M200 366H228L230 392H196z" fill="#5ab8ff" opacity="0.800"/>
<path d="M298 316H320L324 384H296z" fill="#1a80e0" opacity="0.850"/>
<path d="M302 350H318L320 380H300z" fill="#58b0f8" opacity="0.700"/>
<rect x="212" y="312" width="5" height="30" fill="#d83aa8" opacity="0.700"/>
<path d="M210 306H240L232 350H200z" fill="#1a58b0" opacity="0.600"/>
<ellipse cx="345" cy="330" rx="40" ry="16" fill="#2a4a98" opacity="0.600"/>
<ellipse cx="430" cy="330" rx="50" ry="10" fill="#3a3a88" opacity="0.500"/>
<!-- purple reflections right bottom -->
<ellipse cx="440" cy="390" rx="70" ry="16" fill="#3a1a80" opacity="0.400"/>
<ellipse cx="360" cy="440" rx="30" ry="10" fill="#c020a0" opacity="0.500"/>
</g>
<!-- pedestrian reflection dark -->
<path d="M258 322L272 322L274 400L262 400z" fill="#0a0612" opacity="0.750" filter="url(#wet)"/>
<!-- right-bottom purple zone -->
<path d="M440 330H685V454H470z" fill="#08050f" opacity="0.850" filter="url(#b4)"/>
<path d="M520 372L685 372V396L580 380z" fill="#22084e" opacity="0.700" filter="url(#b2)"/>
<path d="M505 389L548 392L685 434V454H510L500 422z" fill="url(#purp)" filter="url(#b1)"/>
<path d="M505 389L520 391L530 454H510L498 422z" fill="#0a0616" opacity="0.500" filter="url(#wet)"/>
<path d="M560 380L685 412" stroke="#5a2a98" stroke-width="1" opacity="0.700"/>
<ellipse cx="470" cy="380" rx="30" ry="8" fill="#1a1a40" opacity="0.800" filter="url(#b4)"/>
<path d="M396 404L505 392L500 454H404z" fill="#05040a" opacity="0.850" filter="url(#b4)"/>
<!-- dark speckle overlay on ground -->
<g mask="url(#gm)"><rect x="0" y="306" width="685" height="148" filter="url(#speck)" opacity="0.650"/></g>
<path d="M505 389L548 392L685 434V454H510L500 422z" fill="url(#purp)" opacity="0.550" filter="url(#b1)"/>
<!-- sidewalk joints -->
<path d="M196 398L420 392L685 372M420 392L470 454" stroke="#05050a" stroke-width="1.200" opacity="0.700" fill="none"/>
<!-- foreground leaves -->
<path d="M0 424L60 428L120 434L200 440L300 448L400 454H0z" fill="#1c1d14" filter="url(#b4)"/>
<ellipse cx="90" cy="446" rx="60" ry="9" fill="#3a3618" opacity="0.700" filter="url(#b4)"/>
<ellipse cx="200" cy="448" rx="40" ry="6" fill="#20304a" opacity="0.700" filter="url(#b4)"/>
<!-- right wall base -->
<path d="M300 298L300 306L386 318L466 327L685 352V298z" fill="url(#wallg)"/>
<path d="M300 306L386 318L466 327L560 338" stroke="#1c4c9c" stroke-width="1.600" fill="none" opacity="0.800" filter="url(#b1)"/>
<path d="M300 308L386 321L466 331L685 358V364L466 337L386 326L300 311z" fill="#0a0c16" opacity="0.800"/>
<rect x="388" y="262" width="22" height="52" fill="#2a2e44" opacity="0.700" filter="url(#b2)"/>
<!-- STREET LEFT NEONS -->
<path d="M82 214H87L89 304H80z" fill="#05070c"/>
<path d="M84 214Q100 208 118 210" stroke="#0a0d14" stroke-width="1.500" fill="none"/>
<ellipse cx="120" cy="210" rx="7" ry="2.500" fill="#ffe6c0" filter="url(#b1)"/>
<ellipse cx="120" cy="211" rx="14" ry="6" fill="#c8a070" opacity="0.400" filter="url(#b4)"/>
<path d="M62 222L86 230V240L62 233z" fill="#25b4f4" filter="url(#b1)"/>
<path d="M62 222L86 230V240L62 233z" fill="#25b4f4" opacity="0.500" filter="url(#b4)"/>
<path d="M93 252L119 260V263L93 256z" fill="#ff4fc0" filter="url(#b1)"/>
<path d="M93 250L119 259V265L93 258z" fill="#ff2fa8" opacity="0.600" filter="url(#b4)"/>
<path d="M119 263L131 267V270L119 266z" fill="#2aa8f0" filter="url(#b1)"/>
<rect x="142" y="232" width="7" height="28" fill="#3ac0f8" filter="url(#b1)"/>
<rect x="140" y="230" width="11" height="32" fill="#2a9ae8" opacity="0.500" filter="url(#b4)"/>
<rect x="90" y="268" width="24" height="30" fill="#6a607a" opacity="0.700" filter="url(#b2)"/>
<rect x="97" y="272" width="14" height="24" fill="#c8b8c8" opacity="0.550" filter="url(#b2)"/>
<rect x="86" y="266" width="4" height="30" fill="#c040c8" opacity="0.800" filter="url(#b1)"/>
<rect x="129" y="135" width="8" height="7" fill="#8a4af0" filter="url(#b1)"/>
<rect x="129" y="147" width="6" height="36" fill="#5a2ab0" opacity="0.850" filter="url(#b1)"/>
<!-- distant lights -->
<g filter="url(#b1)"><rect x="150" y="268" width="3" height="10" fill="#ff50b0"/><rect x="153" y="272" width="3" height="8" fill="#30a8f0"/><rect x="165" y="276" width="8" height="3" fill="#a0b8e0"/><rect x="165" y="285" width="10" height="3" fill="#3a8af0"/><circle cx="175" cy="270" r="1.200" fill="#ffd8a0"/><circle cx="183" cy="282" r="1.200" fill="#ffd8a0"/><circle cx="192" cy="286" r="1.200" fill="#ffd8a0"/><rect x="223" y="262" width="3" height="12" fill="#ff50b0"/><rect x="231" y="270" width="7" height="4" fill="#a0c0f0"/><rect x="231" y="262" width="8" height="3" fill="#3a9af0"/><ellipse cx="213" cy="246" rx="4" ry="1.500" fill="#ffe0b0"/><rect x="212" y="282" width="4" height="8" fill="#30a0f0"/></g>
<rect x="219" y="248" width="1.500" height="56" fill="#0a0e18"/>
<!-- little people left -->
<g fill="#04060a"><ellipse cx="103" cy="289" rx="2" ry="2.200"/><rect x="100.500" y="290" width="5" height="14" rx="2"/><ellipse cx="113" cy="291" rx="1.800" ry="2"/><rect x="111" y="292" width="4.500" height="12" rx="2"/><rect x="120" y="286" width="24" height="16" rx="4"/><rect x="226" y="290" width="4" height="14" rx="2"/><rect x="233" y="290" width="4" height="14" rx="2"/><rect x="240" y="288" width="5" height="16" rx="2"/></g>
<!-- mid neons -->
<path d="M246 236L263 211M249 240L265 217" stroke="#ff5fc0" stroke-width="2.200" stroke-linecap="round" filter="url(#b1)"/>
<path d="M247 238L264 213" stroke="#ff2fa0" stroke-width="7" opacity="0.450" stroke-linecap="round" filter="url(#b4)"/>
<path d="M287 252L300 246M302 245L312 240" stroke="#2aa8f8" stroke-width="2.500" stroke-linecap="round" filter="url(#b1)"/>
<!-- top right neon -->
<ellipse cx="458" cy="60" rx="40" ry="55" fill="#6a1a70" opacity="0.400" filter="url(#b8)"/>
<path d="M443 64L472 26L476 90L446 90z" fill="#b01488" opacity="0.600" filter="url(#b4)"/>
<path d="M438 60L470 20" stroke="#ff2fa0" stroke-width="12" opacity="0.500" stroke-linecap="round" filter="url(#b4)"/>
<path d="M438 58L468 20" stroke="#ff3cb4" stroke-width="3" stroke-linecap="round" filter="url(#b1)"/>
<path d="M441.500 62L471 24.500" stroke="#ffb8ea" stroke-width="3" stroke-linecap="round" filter="url(#b1)"/>
<rect x="427.500" y="0" width="8" height="48" fill="#4a1c40" opacity="0.800" filter="url(#b1)"/>
<rect x="427.500" y="46" width="8" height="40" fill="#d0209c" opacity="0.850" filter="url(#b2)"/>
<rect x="428" y="86" width="6" height="110" fill="#5a2a68" opacity="0.600" filter="url(#b2)"/>
<!-- HOLOGRAMS -->
<g id="holo1">
<path d="M131 37L143 31L256 58L264 68V123L255 131L137 113L125 104L128 89z" fill="#1a6ad0" opacity="0.600" filter="url(#b8)"/>
<path d="M131 37L143 31L256 58L264 68V123L255 131L137 113L125 104L128 89z" fill="#0f48b4" opacity="0.820"/>
<path d="M131 37L143 31L256 58L264 68V123L255 131L137 113L125 104L128 89z" fill="none" stroke="#28b8ff" stroke-width="5" stroke-linejoin="round" opacity="0.600" filter="url(#b2)"/>
<path d="M131 37L143 31L256 58L264 68V123L255 131L137 113L125 104L128 89z" fill="none" stroke="#45d4ff" stroke-width="2.400" stroke-linejoin="round" filter="url(#b1)"/>
<path d="M134 41L144 36L254 62L260 70V121L253 127L139 109L130 102L132 89z" fill="none" stroke="#30a8ff" stroke-width="0.800" opacity="0.900"/>
<ellipse cx="195" cy="87" rx="27" ry="24" fill="#2a8af0" opacity="0.500" transform="rotate(12 195 87)"/>
<ellipse cx="195" cy="87" rx="27" ry="24" fill="none" stroke="#6ad8ff" stroke-width="1.400" transform="rotate(12 195 87)" filter="url(#b1)"/>
<ellipse cx="195" cy="87" rx="20" ry="18" fill="none" stroke="#5ac0ff" stroke-width="0.900" transform="rotate(12 195 87)"/>
<ellipse cx="195" cy="87" rx="31" ry="28" fill="none" stroke="#5ac0ff" stroke-width="0.600" stroke-dasharray="2 3" transform="rotate(12 195 87)"/>
<path d="M166 80L226 94M192 60L198 114" stroke="#6ad8ff" stroke-width="0.600"/>
<path d="M174 80Q194 72 218 90Q200 100 180 92L172 86z" fill="#ee8cec" opacity="0.900" filter="url(#b1)"/>
<path d="M184 78L206 96M200 80L190 94" stroke="#ffb8f8" stroke-width="1.200" opacity="0.800" filter="url(#b1)"/>
<g stroke="#f070e0" stroke-width="1.600" opacity="0.950" filter="url(#b1)"><path d="M140 45L172 52M140 50L164 55.500M140 55L174 62.500M140 60L160 64.500M140 65L150 67.500M140 70L154 73"/></g>
<path d="M146 38L176 45M180 46L196 50" stroke="#f070e0" stroke-width="1.200" opacity="0.800"/>
<g stroke="#50c8ff" stroke-width="1.500" opacity="0.950"><path d="M140 88L156 91M140 93L154 96M140 98L158 101.500M140 103L156 106M140 108L168 113"/></g>
<path d="M136 84L160 88V108L136 104z" fill="none" stroke="#50c8ff" stroke-width="1"/>
<path d="M232 64L256 70V96L232 91z" fill="#36b4f8" opacity="0.850"/>
<path d="M230 62L258 69V98L230 92z" fill="none" stroke="#f080f0" stroke-width="1" filter="url(#b1)"/>
<path d="M230 100L256 105V124L230 119z" fill="#9a50e0" opacity="0.550"/>
<path d="M230 100L256 105V124L230 119z" fill="none" stroke="#f080f0" stroke-width="1.200" filter="url(#b1)"/>
<path d="M234 104L252 108" stroke="#ff90f0" stroke-width="1.600" opacity="0.900"/>
<rect x="220" y="64" width="6" height="12" fill="#f070e0" opacity="0.850" filter="url(#b1)" transform="rotate(12 223 70)"/>
<path d="M190 118L254 128" stroke="#50c8ff" stroke-width="1.200" opacity="0.900"/>
</g>
<g id="holo2">
<path d="M223 147L281 154L284 189L224 183z" fill="#e040c8" opacity="0.550" filter="url(#b4)"/>
<path d="M223 147L281 154L284 189L224 183z" fill="#7a2cae" opacity="0.880"/>
<path d="M223 147L281 154L284 189L224 183z" fill="none" stroke="#ff5fd4" stroke-width="2.800" stroke-linejoin="round" filter="url(#b1)"/>
<path d="M240 163Q254 156 268 166Q262 178 246 176z" fill="#f0a0f0" opacity="0.700" filter="url(#b1)"/>
<path d="M228 153L242 155M228 157.500L240 159M228 162L238 163M266 158L278 160M268 163L279 164.500M268 168L279 169.500M268 173L279 174.500M246 180L258 181" stroke="#ffa8f0" stroke-width="1.300" opacity="0.850"/>
<path d="M228 177L240 178.500M264 180L278 182" stroke="#50c8ff" stroke-width="2.200"/>
</g>
<g id="holo3">
<path d="M184 193L230 197V220L186 216z" fill="#2a9af0" opacity="0.550" filter="url(#b4)"/>
<path d="M184 193L230 197V220L186 216z" fill="#1878d8" opacity="0.900"/>
<path d="M184 193L230 197V220L186 216z" fill="none" stroke="#48d0ff" stroke-width="2.200" stroke-linejoin="round" filter="url(#b1)"/>
<ellipse cx="206" cy="207" rx="10" ry="7" fill="#70d8ff" opacity="0.650" filter="url(#b1)"/>
<path d="M188 198L200 199M188 202L196 203M216 200L227 201M216 204L227 205M189 212L197 213" stroke="#98e4ff" stroke-width="1.300" opacity="0.900"/>
<path d="M218 213L227 214" stroke="#f070e0" stroke-width="2.400"/>
</g>

<!-- RAIN -->
<rect x="0" y="0" width="685" height="310" fill="url(#rain)" opacity="0.220"/>
<rect x="0" y="0" width="685" height="310" fill="url(#rain2)" opacity="0.180"/>
<!-- PEDESTRIANS -->
<g fill="#05070c">
<ellipse cx="264" cy="250" rx="5" ry="5.500"/>
<path d="M254 262Q257 256 264 256Q271 256 275 262L278 290L273 292L272 322H266L264 300L262 322H256L256 292L251 290z"/>
<ellipse cx="291" cy="267" rx="3.600" ry="4"/>
<path d="M284 276Q286 271 291 271Q296 271 298 276L300 298L296 299L296 312H292L291 300L290 312H286L286 299L282 298z"/>
</g>
<ellipse cx="266" cy="330" rx="8" ry="14" fill="#0a0510" opacity="0.700" filter="url(#b2)"/>
<!-- box + right person -->
<path d="M411 258L443 255V320L411 316z" fill="#080a12"/>
<path d="M411 258L420 257V317L411 316z" fill="#141a30" opacity="0.800"/>
<path d="M447 180Q455 166 464 172L470 190V340H448L446 250Q442 210 447 180z" fill="#0a0c12"/>
<path d="M450 200Q458 195 466 200V250H450z" fill="#1a1e28" opacity="0.700" filter="url(#b2)"/>
<!-- ROBOT -->
<g id="robot">
<ellipse cx="350" cy="170" rx="70" ry="90" fill="#2a3a78" opacity="0.350" filter="url(#b8)"/>
<!-- back leg -->
<path d="M366 270L396 262L394 300L386 340L372 342L368 300z" fill="#0d0a1c"/>
<path d="M380 280L391 276L389 312L381 334z" fill="#3a2a68" opacity="0.600" filter="url(#b1)"/>
<!-- hips / pants -->
<path d="M338 198L390 198L398 230L400 262L386 292L364 294L348 298L324 284L322 240L330 214z" fill="#08080f"/>
<path d="M372 210L392 206L396 258L384 284L376 270z" fill="#2a1a50" opacity="0.700" filter="url(#b2)"/>
<path d="M326 236L340 238L338 276L326 278z" fill="#1c1c2a" opacity="0.900"/>
<!-- left arm -->
<path d="M304 112Q310 102 324 106L329 130L325 166L319 200L314 228Q308 240 297 232L297 208L299 168L301 136z" fill="#13141d"/>
<path d="M306 130L322 128L321 158L304 160z" fill="#4a4e62"/>
<path d="M303 172L319 172L314 204L300 204z" fill="#20202e"/>
<path d="M308 132L317 131L316 156L307 157z" fill="#9096aa" opacity="0.850" filter="url(#b1)"/>
<path d="M299 206L313 208L311 230Q304 238 297 230z" fill="#0a0a12"/>
<!-- right arm -->
<path d="M398 110Q410 106 416 120L420 150L425 190L425 230Q420 246 408 236L407 200L401 168L397 136z" fill="#11121b"/>
<path d="M402 132L416 134L420 162L406 164z" fill="#34384e"/>
<path d="M408 176L422 176L424 208L411 210z" fill="#1c1c2a"/>
<path d="M409 140L415 141L418 160L412 161z" fill="#7a80a0" opacity="0.600" filter="url(#b1)"/>
<path d="M408 212L424 210L425 234Q418 246 408 236z" fill="#08080f"/>
<!-- torso -->
<path d="M320 108L340 98L384 98L402 110L399 140L388 160L384 198L346 198L340 160L326 142z" fill="#0e0f18"/>
<path d="M326 112L344 104L380 104L396 114L392 138L380 152L352 154L332 142z" fill="#1e2030"/>
<path d="M328 116L344 108L362 108L358 138L336 138z" fill="#545870" opacity="0.550" filter="url(#b1)"/>
<path d="M352 152L380 152L383 196L347 196z" fill="#161722"/>
<path d="M342 192L388 192L392 202L338 202z" fill="#1c1c28"/>
<path d="M390 122Q396 140 386 158L378 158Q386 140 383 124z" fill="#7a2aa8" opacity="0.750" filter="url(#b1)"/>
<!-- hood -->
<path d="M328 100Q336 84 352 86L376 84Q390 92 388 106L370 114L344 112z" fill="#05060b"/>
<!-- head -->
<path d="M331 62Q333 47 350 47Q367 49 369 66L367 84Q356 92 342 88L333 80z" fill="#1a1c28"/>
<path d="M335 58Q340 49 352 50Q363 53 365 64L361 72L340 70z" fill="#7a8090" opacity="0.600" filter="url(#b1)"/>
<path d="M331 66L335 86L343 90L341 72z" fill="#8a6a58" opacity="0.800"/>
<!-- neon on head -->
<circle cx="341.500" cy="72" r="4.300" fill="#0a2a58"/><circle cx="341.500" cy="72" r="4.300" fill="none" stroke="#3ac0ff" stroke-width="2" filter="url(#b1)"/>
<circle cx="341.500" cy="72" r="7" fill="#2a9aff" opacity="0.400" filter="url(#b2)"/>
<circle cx="351.500" cy="65" r="2.200" fill="#50c8ff" filter="url(#b1)"/>
<path d="M357 68.500L364 69.500" stroke="#ff50c0" stroke-width="2.200" stroke-linecap="round" filter="url(#b1)"/>
<!-- shoulder ring pink -->
<ellipse cx="317.500" cy="118.500" rx="8" ry="10" fill="#ff30b0" opacity="0.500" filter="url(#b4)"/>
<ellipse cx="317.500" cy="118.500" rx="7" ry="8.500" fill="#3a0a34"/><ellipse cx="317.500" cy="118.500" rx="7" ry="8.500" fill="none" stroke="#ff4fc0" stroke-width="3.200" filter="url(#b1)"/>
<!-- big blue ring -->
<circle cx="371.500" cy="120.500" r="14" fill="#2a9aff" opacity="0.550" filter="url(#b4)"/>
<circle cx="371.500" cy="120.500" r="10" fill="#0c5ad0"/><circle cx="371.500" cy="120.500" r="10" fill="none" stroke="#40c8ff" stroke-width="3.200" filter="url(#b1)"/><circle cx="371.500" cy="120.500" r="4.500" fill="none" stroke="#58d0ff" stroke-width="2" filter="url(#b1)"/>
<circle cx="355.800" cy="139.600" r="3" fill="#40b8ff" filter="url(#b1)"/><circle cx="355.800" cy="139.600" r="6" fill="#2a9aff" opacity="0.450" filter="url(#b2)"/>
<!-- right shoulder pink -->
<path d="M402 117L408 134" stroke="#ff4fc0" stroke-width="3" stroke-linecap="round" filter="url(#b1)"/>
<path d="M402 117L408 134" stroke="#ff30b0" stroke-width="8" stroke-linecap="round" opacity="0.400" filter="url(#b4)"/>
<path d="M381 140L389 152" stroke="#ff4fc0" stroke-width="2.200" stroke-linecap="round" filter="url(#b1)"/>
<!-- spine -->
<g stroke="#38b0ff" stroke-width="1.600" filter="url(#b1)"><path d="M362 155H371M362 159.500H371M362 164H371M362 168.500H371M362 173H371"/></g>
<!-- arm squares -->
<rect x="316.500" y="160" width="7" height="8" rx="1.500" fill="#2a0a28" stroke="#ff4fc0" stroke-width="1.800" filter="url(#b1)"/>
<rect x="411" y="164" width="7" height="8" rx="1.500" fill="#2a0a28" stroke="#ff4fc0" stroke-width="1.800" filter="url(#b1)"/>
<path d="M423 184L424 208" stroke="#ff4fc0" stroke-width="1.800" stroke-linecap="round" filter="url(#b1)"/>
<path d="M301 196L299 214" stroke="#a050f0" stroke-width="1.500" stroke-linecap="round" filter="url(#b1)" opacity="0.800"/>
<!-- front leg -->
<path d="M324 268L362 262L366 292L352 298L332 296z" fill="#0c0c16"/>
<path d="M334 296L358 292L384 350L372 358L354 352z" fill="#2a2c3c"/>
<path d="M343 298L356 296L378 348L371 352z" fill="#a8b0c4" opacity="0.900" filter="url(#b1)"/>
<path d="M352 300L361 298L383 346L378 350z" fill="#3a5078" opacity="0.900"/>
<path d="M339 306L361 352" stroke="#ff4fc0" stroke-width="2.200" stroke-linecap="round" filter="url(#b1)"/>
<path d="M339 306L361 352" stroke="#ff30b0" stroke-width="6" stroke-linecap="round" opacity="0.400" filter="url(#b2)"/>
<!-- knee -->
<ellipse cx="327.500" cy="294.500" rx="4" ry="6" fill="#2a0a28" stroke="#ff4fc0" stroke-width="2" filter="url(#b1)"/>
<rect x="342" y="287" width="14" height="7" rx="2.500" fill="#3a0a30" stroke="#ff5fc8" stroke-width="2.200" filter="url(#b1)"/>
<rect x="339" y="284" width="20" height="13" rx="3" fill="#ff30b0" opacity="0.500" filter="url(#b4)"/>
<path d="M368 296L376 297" stroke="#ff4fc0" stroke-width="1.800" stroke-linecap="round" filter="url(#b1)"/>
<!-- boot -->
<path d="M354 352L380 346L398 360Q406 374 402 390L394 414L374 416L364 398L346 392Q342 380 348 366z" fill="#0a0a12"/>
<path d="M380 352L396 362Q402 376 398 390L390 408L378 384z" fill="#1e202c" opacity="0.900"/>
<circle cx="367" cy="363" r="3.500" fill="#2a2c38" stroke="#6a6e80" stroke-width="1.200"/>
<path d="M357 391L367 391.500" stroke="#ff4fc0" stroke-width="2" stroke-linecap="round" filter="url(#b1)"/>
<path d="M357 391L367 391.500" stroke="#ff30b0" stroke-width="6" stroke-linecap="round" opacity="0.350" filter="url(#b2)"/>
<!-- robot reflection -->
<path d="M352 412L398 412L404 454H362z" fill="#06050c" opacity="0.850" filter="url(#b2)"/>
<path d="M362 416L368 454" stroke="#e030a8" stroke-width="3" opacity="0.700" filter="url(#b2)"/>
</g>
</svg>
<!--IMG-END-->
</div>
<!-- selection -->
<div class="abs" style="left:413px;top:106.500px;width:811px;height:457px;border:2px solid #1cc3d9"></div>
<div class="abs hd" style="left:407px;top:101px;width:12.500px;height:12.500px;border-radius:50%"></div>
<div class="abs hd" style="left:407px;top:556.500px;width:12.500px;height:12.500px;border-radius:50%"></div>
<div class="abs hd" style="left:1216.500px;top:556.500px;width:12.500px;height:12.500px;border-radius:50%"></div>
<div class="abs hd" style="left:409.500px;top:326.500px;width:8.500px;height:17.500px;border-radius:5px"></div>
<div class="abs hd" style="left:809px;top:559px;width:18px;height:8.500px;border-radius:5px"></div>
<!-- panel toggle -->
<div class="abs" style="left:360px;top:299px;width:5px;height:45px;background:#2a2d30;border-radius:0 5px 5px 0"></div>
<svg class="abs" style="left:359.500px;top:316.500px" width="5" height="10" viewBox="0 0 6 11" fill="none" stroke="#9a9ea4" stroke-width="1.200" stroke-linecap="round" stroke-linejoin="round"><path d="M4.500 1.500l-3.500 4l3.500 4"/></svg>
<!-- floating toolbar -->
<div class="abs" style="left:747.500px;top:80.500px;width:141.500px;height:32px;background:#fcfdfd;border-radius:8px;border:1px solid #d9dfe5;box-shadow:0 1px 5px rgba(0,0,0,0.100)"></div>
<svg class="abs" style="left:761px;top:89px" width="16" height="16" viewBox="0 0 16 16" fill="none" stroke="#1a1c1f" stroke-width="1.600" stroke-linecap="round" stroke-linejoin="round"><path d="M4 1.200v10.800h10.800M1.200 4h10.800v10.800"/><path d="M6.500 9.500l3-3" stroke-width="1"/></svg>
<svg class="abs" style="left:794px;top:89px" width="16" height="16" viewBox="0 0 16 16" fill="none" stroke="#1a1c1f" stroke-width="1.500" stroke-linecap="round" stroke-linejoin="round"><rect x="2" y="1.800" width="4.400" height="4.400" rx="0.500"/><rect x="9.600" y="9.800" width="4.400" height="4.400" rx="0.500"/><path d="M9.500 2h2.200a1.800 1.800 0 0 1 1.800 1.800v2M6.500 14h-2.200a1.800 1.800 0 0 1-1.800-1.800v-2M11.800 4.600l1.700 1.400l1.400-1.700M4.200 11.400l-1.700-1.400l-1.400 1.700"/></svg>
<svg class="abs" style="left:826px;top:89px" width="16" height="16" viewBox="0 0 16 16" fill="none" stroke="#1a1c1f" stroke-width="1.500" stroke-linecap="round" stroke-linejoin="round"><rect x="1.500" y="4.500" width="10" height="10" rx="2.200"/><path d="M4.800 1.600h6.400a3.200 3.200 0 0 1 3.200 3.200v6.400M6.500 7.200v4.600M4.200 9.500h4.600"/></svg>
<svg class="abs" style="left:859px;top:94px" width="16" height="6" viewBox="0 0 16 6" fill="#1a1c1f"><circle cx="3" cy="3" r="1.300"/><circle cx="8" cy="3" r="1.300"/><circle cx="13" cy="3" r="1.300"/></svg>
<!-- right-side peeking panel + scrollbars -->
<div class="abs" style="left:1351px;top:78px;width:8px;height:378px;background:#fff;border-radius:6px"></div>
<div class="abs" style="left:1361px;top:71px;width:4px;height:35px;background:#c3c7cb;border-radius:2px 0 0 2px"></div>
<div class="abs" style="left:437px;top:594.500px;width:96px;height:4.500px;background:#c9cccf;border-radius:2.500px"></div>
<!-- BOTTOM -->
<div id="bottom" class="abs"></div>
<svg class="abs" style="left:373px;top:612px" width="16" height="16" viewBox="0 0 16 16" fill="none" stroke="#1a1c1f" stroke-width="1.500" stroke-linecap="round" stroke-linejoin="round"><rect x="1.500" y="4.500" width="10" height="10" rx="2.200"/><path d="M4.800 1.600h6.400a3.200 3.200 0 0 1 3.200 3.200v6.400"/><rect x="5" y="8" width="3" height="3" fill="#1a1c1f" stroke-width="1"/></svg>
<svg class="abs" style="left:410px;top:612px" width="15" height="16" viewBox="0 0 15 16" fill="none" stroke="#cdd1d6" stroke-width="1.400" stroke-linecap="round" stroke-linejoin="round"><path d="M1.500 4.500h12M5.500 4.500v-1.800a1 1 0 0 1 1-1h2a1 1 0 0 1 1 1v1.800M3 4.500l0.800 8.600a1.400 1.400 0 0 0 1.400 1.300h4.600a1.400 1.400 0 0 0 1.400-1.300l0.800-8.600"/></svg>
<div class="abs" style="left:439.500px;top:613px;width:1px;height:14px;background:#dde0e4"></div>
<svg class="abs" style="left:455px;top:612px" width="17" height="16" viewBox="0 0 17 16" fill="none" stroke="#1a1c1f" stroke-width="1.600" stroke-linecap="round" stroke-linejoin="round"><path d="M9.500 12.500h-6a2 2 0 0 1-2-2v-7a2 2 0 0 1 2-2h8.500a2 2 0 0 1 2 2v5.500"/><path d="M13.800 11v4M11.800 13h4" stroke-width="1.400"/></svg>
<div class="t" style="left:476.500px;top:613px;font-size:13px;color:#1a1c1f;text-shadow:0.300px 0 0 #1a1c1f">Add page</div>
<svg class="abs" style="left:1225px;top:614px" width="9" height="13" viewBox="0 0 9 13" fill="none" stroke="#c9cdd2" stroke-width="1.300" stroke-linecap="round" stroke-linejoin="round"><path d="M6.800 1.500l-5 5l5 5"/></svg>
<div class="t" style="left:1256px;top:613px;font-size:13px;color:#1a1c1f;letter-spacing:-0.800px;text-shadow:0.300px 0 0 #1a1c1f">1/1</div>
<svg class="abs" style="left:1293px;top:614px" width="9" height="13" viewBox="0 0 9 13" fill="none" stroke="#c9cdd2" stroke-width="1.300" stroke-linecap="round" stroke-linejoin="round"><path d="M2.200 1.500l5 5l-5 5"/></svg>
<div class="abs" style="left:1322px;top:613px;width:1px;height:15px;background:#dde0e4"></div>
<svg class="abs" style="left:1336px;top:611px" width="17" height="18" viewBox="0 0 17 18" fill="none" stroke="#1a1c1f" stroke-width="1.600" stroke-linecap="round" stroke-linejoin="round"><rect x="2" y="8" width="13" height="8" rx="1.600"/><path d="M5 5.200l3.500-3l3.500 3"/></svg>
<!-- POPUP -->
<div class="abs" style="left:987px;top:48px;width:364px;height:431px;background:#fff;border-radius:13px;border:1px solid #e6e9ec;box-shadow:0 4px 16px rgba(20,30,40,0.100)"></div>
<div class="t" style="left:1017px;top:83px;font-size:14px;font-weight:bold;color:#15171a;letter-spacing:0.100px">Export</div>
<div class="t" style="left:1017px;top:121px;font-size:13px;color:#15171a;letter-spacing:-0.100px">Format</div>
<div class="abs sel" style="left:1017px;top:144.500px;width:304px;height:35px"></div>
<div class="t" style="left:1028.500px;top:155px;font-size:13px;color:#15171a;letter-spacing:-0.700px">PNG</div>
<svg class="abs" style="left:1296px;top:157px" width="12" height="9" viewBox="0 0 12 9" fill="none" stroke="#1a1c1f" stroke-width="1.700" stroke-linecap="round" stroke-linejoin="round"><path d="M1.800 2l4.200 4.200l4.200-4.200"/></svg>
<div class="t" style="left:1017px;top:200px;font-size:13px;color:#15171a;letter-spacing:-0.500px">Size</div>
<div class="abs sel" style="left:1017px;top:223px;width:304px;height:36px"></div>
<div class="t" style="left:1028px;top:234px;font-size:13px;color:#15171a;letter-spacing:-1.200px;font-weight:bold">1×</div>
<div class="t" style="left:1044.500px;top:234px;font-size:13px;color:#a0a6ad;letter-spacing:0.200px">(7.62 × 5.08 cm)</div>
<svg class="abs" style="left:1296px;top:236px" width="12" height="9" viewBox="0 0 12 9" fill="none" stroke="#1a1c1f" stroke-width="1.700" stroke-linecap="round" stroke-linejoin="round"><path d="M1.800 2l4.200 4.200l4.200-4.200"/></svg>
<div class="abs cb" style="left:1017px;top:277px;width:18px;height:18px"></div>
<div class="t" style="left:1042.500px;top:279px;font-size:13px;color:#15171a;letter-spacing:-0.050px">Transparent background</div>
<svg class="abs" style="left:1189px;top:280px" width="12" height="12" viewBox="0 0 12 12" fill="none" stroke="#9aa0a7" stroke-width="1" stroke-linecap="round"><circle cx="6" cy="6" r="5"/><path d="M6 5.400v3M5.200 8.500h1.600M5.400 5.400h0.600"/><circle cx="6" cy="3.500" r="0.400" fill="#9aa0a7"/></svg>
<div class="abs cb" style="left:1017px;top:314px;width:18px;height:18px"></div>
<div class="t" style="left:1042.500px;top:316px;font-size:13px;color:#15171a">Compress file</div>
<div class="t" style="left:1126.500px;top:316px;font-size:13px;color:#a0a6ad;letter-spacing:0.250px">(lower quality)</div>
<div class="abs" style="left:1017px;top:351px;width:304px;height:1px;background:#e3e6ea"></div>
<div class="abs" style="left:1017px;top:370px;width:304px;height:35.500px;border-radius:8px;background:#20c3d8"></div>
<div class="t" style="left:1017px;top:381.500px;width:304px;text-align:center;font-size:12px;font-weight:bold;color:#fff">Download</div>
<div class="abs sel" style="left:1017px;top:413px;width:304px;height:35.500px"></div>
<div class="t" style="left:1017px;top:425px;width:304px;text-align:center;font-size:12.600px;color:#15171a;text-shadow:0.300px 0 0 #15171a">Copy as PNG</div>
<!-- RED ANNOTATIONS -->
<div class="abs" style="left:1198px;top:4px;width:130px;height:46px;border:4px solid #e00000;border-radius:1px"></div>
<div class="abs" style="left:1005px;top:75px;width:327px;height:387px;border:4.500px solid #e00000;border-radius:1px"></div>
</div>
</body>
</html>
